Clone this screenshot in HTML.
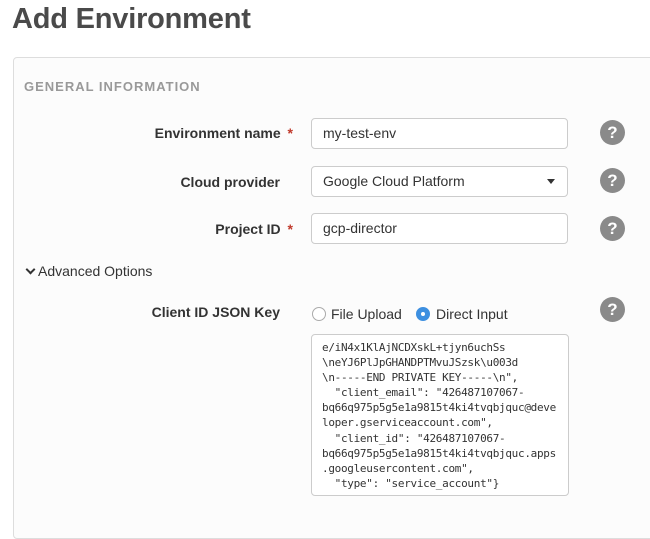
<!DOCTYPE html><html><head><style>
body{margin:0;width:650px;height:500px;overflow:hidden;background:#fff;font-family:"Liberation Sans",sans-serif;color:#333;position:relative}
.a{position:absolute}
h1{position:absolute;left:12px;top:3px;margin:0;font-size:29px;font-weight:bold;color:#4a4a4a;letter-spacing:-0.2px}
.panel{position:absolute;left:13px;top:57px;width:660px;height:480px;border:1px solid #ddd;border-radius:4px;background:#fcfcfc}
.sec{left:24px;top:79px;font-size:13px;font-weight:bold;color:#999;letter-spacing:1px}
.lbl{font-size:14px;font-weight:bold;color:#333;text-align:right;width:270px;left:10px}
.st{color:#c0392b;font-weight:bold;margin-left:3px}
.inp{left:311px;width:244px;height:29px;border:1px solid #ccc;border-radius:4px;background:#fff;font-size:14px;line-height:29px;padding-left:11px}
.q{left:600px;width:25px;height:25px;border-radius:50%;background:#8a8a8a;color:#fff;font-weight:bold;font-size:17px;text-align:center;line-height:25px}
.ta{left:311px;top:334px;width:246px;height:150px;border:1px solid #ccc;border-radius:4px;background:#fff;padding:5px 0 5px 10px;font-family:"DejaVu Sans Mono","Liberation Mono",monospace;font-size:11px;line-height:15.1px;white-space:pre;color:#333;letter-spacing:-0.3px;overflow:hidden}
.r{width:12px;height:12px;border-radius:50%;border:1px solid #aaa;background:#fff}
</style></head><body>
<h1>Add Environment</h1>
<div class="panel"></div>
<div class="a sec">GENERAL INFORMATION</div>
<div class="a lbl" style="top:125px;width:283px">Environment name <span class="st">*</span></div>
<div class="a inp" style="top:118px">my-test-env</div>
<div class="a q" style="top:120px">?</div>
<div class="a lbl" style="top:174px">Cloud provider</div>
<div class="a inp" style="top:166px">Google Cloud Platform<span style="position:absolute;right:12px;top:12px;border-left:4px solid transparent;border-right:4px solid transparent;border-top:5px solid #333"></span></div>
<div class="a q" style="top:168px">?</div>
<div class="a lbl" style="top:221px;width:283px">Project ID <span class="st">*</span></div>
<div class="a inp" style="top:213px">gcp-director</div>
<div class="a q" style="top:216px">?</div>
<div class="a" style="left:27px;top:266px;width:5px;height:5px;border-right:2px solid #333;border-bottom:2px solid #333;transform:rotate(45deg)"></div>
<div class="a" style="left:38px;top:263px;font-size:14px;color:#333">Advanced Options</div>
<div class="a lbl" style="top:304px">Client ID JSON Key</div>
<div class="a r" style="left:312px;top:307px"></div>
<div class="a" style="left:331px;top:306px;font-size:14px">File Upload</div>
<div class="a r" style="left:416px;top:307px;background:#3d8fe0;border-color:#3d8fe0"><div style="width:4px;height:4px;background:#fff;border-radius:50%;margin:4px"></div></div>
<div class="a" style="left:436px;top:306px;font-size:14px">Direct Input</div>
<div class="a q" style="top:297px">?</div>
<div class="a ta">e/iN4x1KlAjNCDXskL+tjyn6uchSs
\neYJ6PlJpGHANDPTMvuJSzsk\u003d
\n-----END PRIVATE KEY-----\n",
  "client_email": "426487107067-
bq66q975p5g5e1a9815t4ki4tvqbjquc@deve
loper.gserviceaccount.com",
  "client_id": "426487107067-
bq66q975p5g5e1a9815t4ki4tvqbjquc.apps
.googleusercontent.com",
  "type": "service_account"}</div>
</body></html>
